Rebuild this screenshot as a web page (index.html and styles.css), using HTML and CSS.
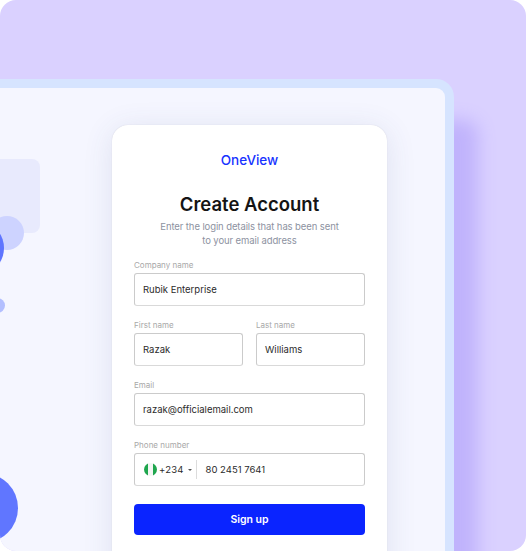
FILE: index.html
```html
<!DOCTYPE html>
<html lang="en">
<head>
    <meta charset="UTF-8">
    <meta name="viewport" content="width=device-width, initial-scale=1.0">
    <title>OneView</title>
    <link rel="stylesheet" href="styles.css">
</head>
<body>
    <div class="frame">
        <div class="panel">
            <div class="deco deco-square"></div>
            <div class="deco deco-pale"></div>
            <div class="deco deco-blue"></div>
            <div class="deco deco-dot"></div>
            <div class="deco deco-large"></div>

            <div class="card">
                <div class="logo">OneView</div>
                <h1 class="title">Create Account</h1>
                <p class="subtitle">Enter the login details that has been sent<br>to your email address</p>

                <div class="field">
                    <label class="label">Company name</label>
                    <div class="input">Rubik Enterprise</div>
                </div>

                <div class="field-row">
                    <div class="field">
                        <label class="label">First name</label>
                        <div class="input">Razak</div>
                    </div>
                    <div class="field">
                        <label class="label">Last name</label>
                        <div class="input">Williams</div>
                    </div>
                </div>

                <div class="field">
                    <label class="label">Email</label>
                    <div class="input">razak@officialemail.com</div>
                </div>

                <div class="field">
                    <label class="label">Phone number</label>
                    <div class="input phone">
                        <svg class="flag" width="13" height="13" viewBox="0 0 13 13">
                            <defs><clipPath id="flag-clip"><circle cx="6.5" cy="6.5" r="6.5"/></clipPath></defs>
                            <g clip-path="url(#flag-clip)">
                                <rect width="13" height="13" fill="#f4f6f4"/>
                                <rect width="4" height="13" fill="#1fa64e"/>
                                <rect x="9" width="4" height="13" fill="#1fa64e"/>
                            </g>
                        </svg>
                        <span class="code">+234</span>
                        <span class="caret"></span>
                        <span class="divider"></span>
                        <span>80 2451 7641</span>
                    </div>
                </div>

                <button class="submit">Sign up</button>
            </div>
        </div>
    </div>
</body>
</html>
```

FILE: styles.css
```css
* {
    box-sizing: border-box;
}

html, body {
    margin: 0;
    background-color: #fff;
}

.frame {
    width: 526px;
    height: 551px;
    padding-top: 79px;
    overflow: hidden;
    background-color: #dad1ff;
    border-radius: 16px;
    font-family: Inter, "Noto Sans", sans-serif;
}

.panel {
    position: relative;
    width: 474px;
    height: 520px;
    margin-left: -20px;
    padding-top: 37px;
    padding-left: 123px;
    background-color: #f5f6ff;
    border: 9px solid #d6e4ff;
    border-radius: 18px;
    box-shadow: 28px 37px 18px -4px #c0b3fc;
}

.deco {
    position: absolute;
}

.deco-square {
    left: 0;
    top: 71px;
    width: 51px;
    height: 74px;
    background-color: #e8eafd;
    border-radius: 8px;
}

.deco-pale {
    left: 1px;
    top: 128px;
    width: 34px;
    height: 34px;
    background-color: #cdd3ff;
    border-radius: 50%;
}

.deco-blue {
    left: -22px;
    top: 137px;
    width: 37px;
    height: 46px;
    background-color: #5f75ff;
    border-radius: 50%;
}

.deco-dot {
    left: 1px;
    top: 210px;
    width: 15px;
    height: 15px;
    background-color: #b3bfff;
    border-radius: 50%;
}

.deco-large {
    left: -41px;
    top: 385px;
    width: 70px;
    height: 70px;
    background-color: #6076ff;
    border-radius: 50%;
}

.card {
    position: relative;
    display: flex;
    flex-direction: column;
    width: 275px;
    height: 500px;
    padding: 27px 22px 0;
    background-color: #fff;
    border-radius: 16px;
    box-shadow: 0 0 1px #c9cbd8, 0 4px 30px rgba(60, 70, 130, 0.12);
}

.logo {
    font-size: 13.5px;
    line-height: 17px;
    font-weight: 500;
    color: #1733ff;
    text-align: center;
}

.title {
    margin: 22px 0 0;
    font-size: 18.5px;
    line-height: 26px;
    font-weight: 600;
    color: #141414;
    text-align: center;
}

.subtitle {
    margin: 3px 0 0;
    font-size: 9.5px;
    line-height: 14px;
    letter-spacing: -0.1px;
    color: #8d92a1;
    text-align: center;
}

.field {
    display: flex;
    flex-direction: column;
    margin-top: 14px;
}

.subtitle + .field {
    margin-top: 12px;
}

.field-row {
    display: flex;
    gap: 13px;
    margin-top: 14px;
}

.field-row .field {
    flex: 1;
    margin-top: 0;
}

.label {
    height: 13px;
    font-size: 8px;
    line-height: 11px;
    color: #a8a8a8;
}

.input {
    display: flex;
    align-items: center;
    height: 33px;
    padding: 0 8px;
    font-size: 9.5px;
    color: #2b2b2b;
    background-color: #fff;
    border: 1px solid #cbcbcb;
    border-bottom-color: #d9d9d9;
    border-radius: 3px;
}

.phone {
    padding-left: 9px;
}

.flag {
    flex: none;
    margin-right: 2px;
}

.code {
    letter-spacing: 0.2px;
}

.caret {
    width: 0;
    height: 0;
    margin-left: 4px;
    border-left: 2px solid transparent;
    border-right: 2px solid transparent;
    border-top: 2px solid #555;
}

.divider {
    width: 1px;
    height: 19px;
    margin: 0 9px 0 4px;
    background-color: #dcdcdc;
}

.submit {
    height: 31px;
    margin-top: 18px;
    font-family: inherit;
    font-size: 10.5px;
    font-weight: 600;
    color: #fff;
    background-color: #0a24ff;
    border: none;
    border-radius: 4px;
}
```
